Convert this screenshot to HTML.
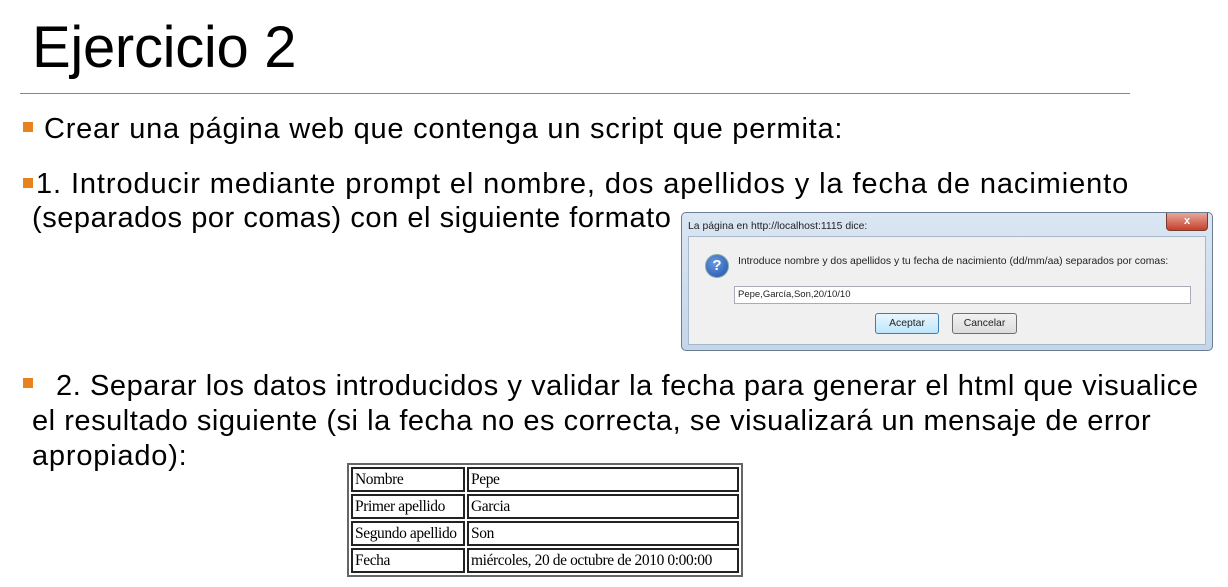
<!DOCTYPE html>
<html><head><meta charset="utf-8"><style>
body{margin:0;width:1228px;height:587px;background:#fff;position:relative;overflow:hidden;font-family:"Liberation Sans",sans-serif;color:#000}
.a{position:absolute;white-space:nowrap}
.t{font-size:29px;letter-spacing:0.9px}
.b{position:absolute;width:10px;height:10px;background:#e8821e}
.dlg{position:absolute;left:681px;top:212px;width:532px;height:139px;background:linear-gradient(#dbe6f3,#c4d6ea);border:1px solid #6b7d92;border-radius:5px;box-sizing:border-box}
.in{position:absolute;left:6px;top:23px;right:6px;bottom:5px;background:#f0f0f0;border:1px solid #a8b8c8}
.d{font-size:10.4px;color:#222}
table{position:absolute;left:347px;top:463px;border:2px solid #666;border-collapse:separate;border-spacing:2px;font-family:"Liberation Serif",serif;font-size:15.5px;letter-spacing:-0.4px}
td{border:2px solid #222;padding:0 2px;height:21px;line-height:21px}
</style></head><body>
<div class="a" style="left:32px;top:14px;font-size:58px;letter-spacing:-0.3px">Ejercicio 2</div>
<div class="a" style="left:20px;top:93px;width:1110px;height:1px;background:#888"></div>
<div class="b" style="left:23px;top:122px"></div>
<div class="a t" style="left:44px;top:113px;letter-spacing:0.77px">Crear una página web que contenga un script que permita:</div>
<div class="b" style="left:23px;top:178px"></div>
<div class="a t" style="left:36px;top:168px">1. Introducir mediante prompt el nombre, dos apellidos y la fecha de nacimiento</div>
<div class="a t" style="left:32px;top:202px;letter-spacing:0.55px">(separados por comas) con el siguiente formato</div>
<div class="b" style="left:23px;top:378px"></div>
<div class="a t" style="left:56px;top:370px;letter-spacing:0.57px">2. Separar los datos introducidos y validar la fecha para generar el html que visualice</div>
<div class="a t" style="left:32px;top:405px;letter-spacing:0.53px">el resultado siguiente (si la fecha no es correcta, se visualizará un mensaje de error</div>
<div class="a t" style="left:32px;top:440px;letter-spacing:0.8px">apropiado):</div>

<div class="dlg">
 <div class="a d" style="left:6px;top:8px">La página en http://localhost:1115 dice:</div>
 <div class="a" style="left:484px;top:0;width:40px;height:17px;background:linear-gradient(#e8a89a,#c4402c);border:1px solid #7a3a30;border-top:0;border-radius:0 0 4px 4px;color:#fff;font-size:11px;text-align:center;line-height:16px;font-weight:bold">x</div>
 <div class="in">
  <div class="a" style="left:16px;top:17px;width:22px;height:22px;border-radius:50%;background:radial-gradient(circle at 40% 35%,#6a9be0,#1c4fa8);border:1px solid #8aa;color:#fff;font-weight:bold;font-size:15px;text-align:center;line-height:22px">?</div>
  <div class="a d" style="left:49px;top:19px">Introduce nombre y dos apellidos y tu fecha de nacimiento (dd/mm/aa) separados por comas:</div>
  <div class="a" style="left:45px;top:49px;width:455px;height:16px;background:#fff;border:1px solid #aab;"><span class="a d" style="left:3px;top:2px;font-size:9.5px">Pepe,García,Son,20/10/10</span></div>
  <div class="a d" style="left:186px;top:76px;width:62px;height:19px;border:1px solid #3c7fb1;border-radius:3px;background:linear-gradient(#eaf6fd,#bee6fd);text-align:center;line-height:19px">Aceptar</div>
  <div class="a d" style="left:263px;top:76px;width:63px;height:19px;border:1px solid #707070;border-radius:3px;background:linear-gradient(#f2f2f2,#dcdcdc);text-align:center;line-height:19px">Cancelar</div>
 </div>
</div>

<table>
<tr><td style="width:106px">Nombre</td><td style="width:264px">Pepe</td></tr>
<tr><td>Primer apellido</td><td>Garcia</td></tr>
<tr><td>Segundo apellido</td><td>Son</td></tr>
<tr><td>Fecha</td><td>miércoles, 20 de octubre de 2010 0:00:00</td></tr>
</table>
</body></html>
